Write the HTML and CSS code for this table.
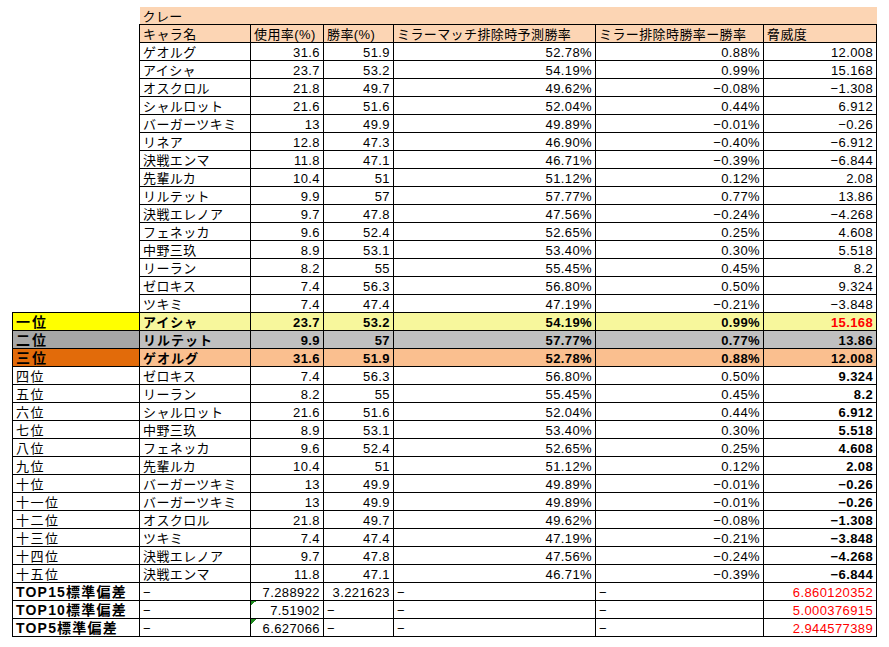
FILE: index.html
```html
<!DOCTYPE html>
<html lang="ja">
<head>
<meta charset="utf-8">
<title>クレー</title>
<link rel="stylesheet" href="styles.css">
</head>
<body>
<table class="sheet">
<colgroup>
<col class="c-a"><col class="c-b"><col class="c-c"><col class="c-d"><col class="c-e"><col class="c-f"><col class="c-g">
</colgroup>
<tbody>
<tr><td class="blank"></td><td class="band" colspan="6">クレー</td></tr>
<tr class="head"><td class="blank"></td><td>キャラ名</td><td>使用率(%)</td><td>勝率(%)</td><td>ミラーマッチ排除時予測勝率</td><td>ミラー排除時勝率ー勝率</td><td>脅威度</td></tr>
<tr><td class="blank"></td><td>ゲオルグ</td><td class="num">31.6</td><td class="num">51.9</td><td class="num">52.78%</td><td class="num">0.88%</td><td class="num">12.008</td></tr>
<tr><td class="blank"></td><td>アイシャ</td><td class="num">23.7</td><td class="num">53.2</td><td class="num">54.19%</td><td class="num">0.99%</td><td class="num">15.168</td></tr>
<tr><td class="blank"></td><td>オスクロル</td><td class="num">21.8</td><td class="num">49.7</td><td class="num">49.62%</td><td class="num">−0.08%</td><td class="num">−1.308</td></tr>
<tr><td class="blank"></td><td>シャルロット</td><td class="num">21.6</td><td class="num">51.6</td><td class="num">52.04%</td><td class="num">0.44%</td><td class="num">6.912</td></tr>
<tr><td class="blank"></td><td>バーガーツキミ</td><td class="num">13</td><td class="num">49.9</td><td class="num">49.89%</td><td class="num">−0.01%</td><td class="num">−0.26</td></tr>
<tr><td class="blank"></td><td>リネア</td><td class="num">12.8</td><td class="num">47.3</td><td class="num">46.90%</td><td class="num">−0.40%</td><td class="num">−6.912</td></tr>
<tr><td class="blank"></td><td>決戦エンマ</td><td class="num">11.8</td><td class="num">47.1</td><td class="num">46.71%</td><td class="num">−0.39%</td><td class="num">−6.844</td></tr>
<tr><td class="blank"></td><td>先輩ルカ</td><td class="num">10.4</td><td class="num">51</td><td class="num">51.12%</td><td class="num">0.12%</td><td class="num">2.08</td></tr>
<tr><td class="blank"></td><td>リルテット</td><td class="num">9.9</td><td class="num">57</td><td class="num">57.77%</td><td class="num">0.77%</td><td class="num">13.86</td></tr>
<tr><td class="blank"></td><td>決戦エレノア</td><td class="num">9.7</td><td class="num">47.8</td><td class="num">47.56%</td><td class="num">−0.24%</td><td class="num">−4.268</td></tr>
<tr><td class="blank"></td><td>フェネッカ</td><td class="num">9.6</td><td class="num">52.4</td><td class="num">52.65%</td><td class="num">0.25%</td><td class="num">4.608</td></tr>
<tr><td class="blank"></td><td>中野三玖</td><td class="num">8.9</td><td class="num">53.1</td><td class="num">53.40%</td><td class="num">0.30%</td><td class="num">5.518</td></tr>
<tr><td class="blank"></td><td>リーラン</td><td class="num">8.2</td><td class="num">55</td><td class="num">55.45%</td><td class="num">0.45%</td><td class="num">8.2</td></tr>
<tr><td class="blank"></td><td>ゼロキス</td><td class="num">7.4</td><td class="num">56.3</td><td class="num">56.80%</td><td class="num">0.50%</td><td class="num">9.324</td></tr>
<tr><td class="blank"></td><td>ツキミ</td><td class="num">7.4</td><td class="num">47.4</td><td class="num">47.19%</td><td class="num">−0.21%</td><td class="num">−3.848</td></tr>

<tr class="top r1"><td class="rank">一位</td><td class="wide">アイシャ</td><td class="num">23.7</td><td class="num">53.2</td><td class="num">54.19%</td><td class="num">0.99%</td><td class="num red">15.168</td></tr>
<tr class="top r2"><td class="rank">二位</td><td class="wide">リルテット</td><td class="num">9.9</td><td class="num">57</td><td class="num">57.77%</td><td class="num">0.77%</td><td class="num">13.86</td></tr>
<tr class="top r3"><td class="rank">三位</td><td class="wide">ゲオルグ</td><td class="num">31.6</td><td class="num">51.9</td><td class="num">52.78%</td><td class="num">0.88%</td><td class="num">12.008</td></tr>
<tr><td class="rank">四位</td><td>ゼロキス</td><td class="num">7.4</td><td class="num">56.3</td><td class="num">56.80%</td><td class="num">0.50%</td><td class="num b">9.324</td></tr>
<tr><td class="rank">五位</td><td>リーラン</td><td class="num">8.2</td><td class="num">55</td><td class="num">55.45%</td><td class="num">0.45%</td><td class="num b">8.2</td></tr>
<tr><td class="rank">六位</td><td>シャルロット</td><td class="num">21.6</td><td class="num">51.6</td><td class="num">52.04%</td><td class="num">0.44%</td><td class="num b">6.912</td></tr>
<tr><td class="rank">七位</td><td>中野三玖</td><td class="num">8.9</td><td class="num">53.1</td><td class="num">53.40%</td><td class="num">0.30%</td><td class="num b">5.518</td></tr>
<tr><td class="rank">八位</td><td>フェネッカ</td><td class="num">9.6</td><td class="num">52.4</td><td class="num">52.65%</td><td class="num">0.25%</td><td class="num b">4.608</td></tr>
<tr><td class="rank">九位</td><td>先輩ルカ</td><td class="num">10.4</td><td class="num">51</td><td class="num">51.12%</td><td class="num">0.12%</td><td class="num b">2.08</td></tr>
<tr><td class="rank">十位</td><td>バーガーツキミ</td><td class="num">13</td><td class="num">49.9</td><td class="num">49.89%</td><td class="num">−0.01%</td><td class="num b">−0.26</td></tr>
<tr><td class="rank">十一位</td><td>バーガーツキミ</td><td class="num">13</td><td class="num">49.9</td><td class="num">49.89%</td><td class="num">−0.01%</td><td class="num b">−0.26</td></tr>
<tr><td class="rank">十二位</td><td>オスクロル</td><td class="num">21.8</td><td class="num">49.7</td><td class="num">49.62%</td><td class="num">−0.08%</td><td class="num b">−1.308</td></tr>
<tr><td class="rank">十三位</td><td>ツキミ</td><td class="num">7.4</td><td class="num">47.4</td><td class="num">47.19%</td><td class="num">−0.21%</td><td class="num b">−3.848</td></tr>
<tr><td class="rank">十四位</td><td>決戦エレノア</td><td class="num">9.7</td><td class="num">47.8</td><td class="num">47.56%</td><td class="num">−0.24%</td><td class="num b">−4.268</td></tr>
<tr><td class="rank">十五位</td><td>決戦エンマ</td><td class="num">11.8</td><td class="num">47.1</td><td class="num">46.71%</td><td class="num">−0.39%</td><td class="num b">−6.844</td></tr>

<tr><td class="label">TOP15標準偏差</td><td>−</td><td class="num">7.288922</td><td class="num">3.221623</td><td>−</td><td>−</td><td class="num red">6.860120352</td></tr>
<tr><td class="label">TOP10標準偏差</td><td>−</td><td class="num flag">7.51902</td><td>−</td><td>−</td><td>−</td><td class="num red">5.000376915</td></tr>
<tr><td class="label">TOP5標準偏差</td><td>−</td><td class="num flag">6.627066</td><td>−</td><td>−</td><td>−</td><td class="num red">2.944577389</td></tr>
</tbody>
</table>
</body>
</html>
```

FILE: styles.css
```css
html, body {
  margin: 0;
  background: #ffffff;
}
body {
  padding: 7px 0 0 12px;
  font-family: "Liberation Sans", "Noto Sans CJK JP", sans-serif;
  font-size: 13px;
  color: #000000;
}
.sheet {
  border-collapse: collapse;
  table-layout: fixed;
  width: 865px;
}
.c-a { width: 127px; }
.c-b { width: 111px; }
.c-c { width: 73px; }
.c-d { width: 70px; }
.c-e { width: 202px; }
.c-f { width: 168px; }
.c-g { width: 113px; }

.sheet td {
  height: 17px;
  padding: 0 3px 0 3px;
  border: 1px solid #000000;
  line-height: 15px;
  vertical-align: bottom;
  white-space: nowrap;
  overflow: hidden;
  letter-spacing: 0.4px;
}
.sheet td.num {
  text-align: right;
  padding-right: 3px;
}
.sheet td.blank {
  border: none;
}
.sheet td.band {
  border: none;
  background: #fcd5b4;
}
.head td {
  background: #fcd5b4;
}
.head td.blank {
  background: transparent;
}
.b {
  font-weight: bold;
}
.red {
  color: #ff0000;
}
.top td {
  font-weight: bold;
}
.sheet td.rank {
  letter-spacing: 1.5px;
}
.top td.rank {
  font-size: 14px;
  letter-spacing: 2px;
}
.sheet td.wide {
  letter-spacing: 1px;
}
.sheet td.label {
  font-weight: bold;
  font-size: 14px;
  letter-spacing: 1.2px;
}
.r1 td { background: #f7f79c; }
.r1 td.rank { background: #ffff00; }
.r2 td { background: #c0c0c0; }
.r2 td.rank { background: #a6a6a6; }
.r3 td { background: #fabf8f; }
.r3 td.rank { background: #e26b0a; }
.flag {
  background: linear-gradient(135deg, #1f8a1f 50%, transparent 50%) no-repeat 0 0 / 5px 5px;
}
```
